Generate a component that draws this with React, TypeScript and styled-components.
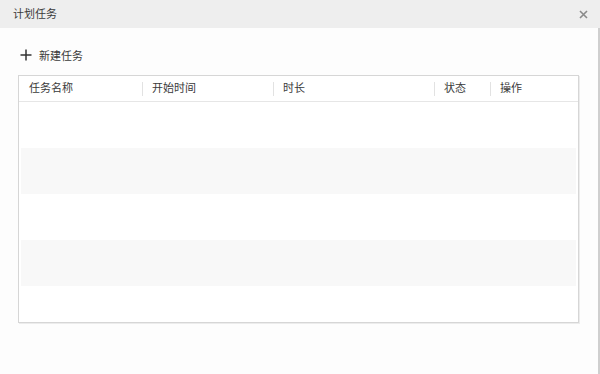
import styled, { createGlobalStyle } from 'styled-components';

const GlobalStyle = createGlobalStyle`
  html, body {
    margin: 0;
    padding: 0;
    background: #fff;
  }
  body {
    font-family: "Liberation Sans", "Noto Sans CJK SC", sans-serif;
    font-size: 11px;
    color: #3a3a3a;
  }
`;

const columns = [
  { title: '任务名称', width: 123 },
  { title: '开始时间', width: 131 },
  { title: '时长', width: 161 },
  { title: '状态', width: 56 },
  { title: '操作', width: 87 },
];

const rows = [0, 1, 2, 3, 4];

const App = () => {
  return (
    <>
      <GlobalStyle />
      <Dialog>
        <TitleBar>
          <Title>计划任务</Title>
          <CloseButton aria-label="close">
            <svg width="9" height="9" viewBox="0 0 9 9">
              <path d="M1 1L8 8M8 1L1 8" stroke="#8a8a8a" strokeWidth="1.6" />
            </svg>
          </CloseButton>
        </TitleBar>
        <Body>
          <AddButton>
            <svg width="12" height="12" viewBox="0 0 12 12">
              <path d="M6 0.5V11.5M0.5 6H11.5" stroke="#333" strokeWidth="1.5" />
            </svg>
            新建任务
          </AddButton>
          <Table>
            <HeaderRow>
              {columns.map((col, i) => (
                <HeaderCell key={col.title} $width={col.width} $divider={i > 0}>
                  {col.title}
                </HeaderCell>
              ))}
            </HeaderRow>
            {rows.map((r) => (
              <Row key={r} $striped={r % 2 === 1} $last={r === rows.length - 1} />
            ))}
          </Table>
        </Body>
      </Dialog>
    </>
  );
};

const Dialog = styled.div`
  width: 600px;
  height: 374px;
  display: flex;
  flex-direction: column;
  box-sizing: border-box;
  border-right: 2px solid #cfcfcf;
  background: #fdfdfd;
`;

const TitleBar = styled.div`
  height: 28px;
  display: flex;
  align-items: center;
  justify-content: space-between;
  padding: 0 11px 0 13px;
  margin-right: -2px;
  background: #eeeeee;
`;

const Title = styled.div`
  font-size: 11px;
  color: #3a3a3a;
  line-height: 28px;
`;

const CloseButton = styled.div`
  display: flex;
  align-items: center;
  justify-content: center;
  width: 12px;
  height: 12px;
  margin-top: 1px;
`;

const Body = styled.div`
  display: flex;
  flex-direction: column;
  padding: 18px 0 0 18px;
`;

const AddButton = styled.div`
  display: flex;
  align-items: center;
  gap: 7px;
  height: 18px;
  padding-left: 2px;
  font-size: 11px;
  color: #3a3a3a;
`;

const Table = styled.div`
  width: 561px;
  margin-top: 11px;
  box-sizing: border-box;
  border: 1px solid #d6d6d6;
  box-shadow: 1px 1px 0 #ececec;
  padding: 0 2px 0 2px;
  background: #fff;
`;

const HeaderRow = styled.div`
  height: 25px;
  display: flex;
  align-items: center;
  border-bottom: 1px solid #e6e6e6;
  margin: 0 -2px;
`;

const HeaderCell = styled.div<{ $width: number; $divider: boolean }>`
  position: relative;
  width: ${(p) => p.$width}px;
  box-sizing: border-box;
  padding-left: 10px;
  font-size: 11px;
  color: #3a3a3a;
  line-height: 25px;

  &::before {
    content: '';
    display: ${(p) => (p.$divider ? 'block' : 'none')};
    position: absolute;
    left: 0;
    top: 6px;
    height: 14px;
    border-left: 1px solid #e2e2e2;
  }
`;

const Row = styled.div<{ $striped: boolean; $last: boolean }>`
  height: ${(p) => (p.$last ? 36 : 46)}px;
  background: ${(p) => (p.$striped ? '#f8f8f8' : '#fff')};
`;

export default App;
